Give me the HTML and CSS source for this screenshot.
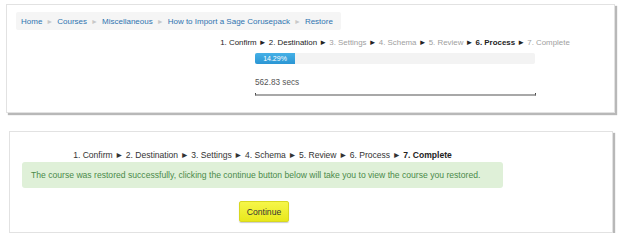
FILE: index.html
```html
<!DOCTYPE html>
<html lang="en">
<head>
    <meta charset="UTF-8">
    <title>Restore course</title>
    <link rel="stylesheet" href="styles.css">
</head>
<body>
    <div class="shot shot-progress">
        <div class="breadcrumb">
            <a href="#">Home</a><span class="sep">&#9658;</span>
            <a href="#">Courses</a><span class="sep">&#9658;</span>
            <a href="#">Miscellaneous</a><span class="sep">&#9658;</span>
            <a href="#">How to Import a Sage Corusepack</a><span class="sep">&#9658;</span>
            <a href="#">Restore</a>
        </div>

        <div class="restore">
            <div class="steps">
                <span class="done">1. Confirm</span> &#9658;
                <span class="done">2. Destination</span> &#9658;
                <span class="todo">3. Settings</span> &#9658;
                <span class="todo">4. Schema</span> &#9658;
                <span class="todo">5. Review</span> &#9658;
                <span class="current">6. Process</span> &#9658;
                <span class="todo">7. Complete</span>
            </div>
            <div class="progress">
                <div class="progress-bar" style="width: 14.29%">14.29%</div>
            </div>
            <div class="timer">562.83 secs</div>
            <div class="timer-line"></div>
        </div>
    </div>

    <div class="shot shot-complete">
        <div class="restore-done">
            <div class="steps steps-done">
                <span>1. Confirm</span> &#9658;
                <span>2. Destination</span> &#9658;
                <span>3. Settings</span> &#9658;
                <span>4. Schema</span> &#9658;
                <span>5. Review</span> &#9658;
                <span>6. Process</span> &#9658;
                <span class="current">7. Complete</span>
            </div>
            <div class="alert-success">
                The course was restored successfully, clicking the continue button below will take you to view the course you restored.
            </div>
            <div class="actions">
                <button class="continue-button">Continue</button>
            </div>
        </div>
    </div>
</body>
</html>
```

FILE: styles.css
```css
* {
    margin: 0;
    padding: 0;
    box-sizing: border-box;
}

body {
    font-family: 'Liberation Sans', Arial, sans-serif;
    background-color: #fff;
    color: #333;
    font-size: 8.5px;
}

.shot {
    background-color: #fff;
    border: 1px solid #e2e2e2;
    box-shadow: 2px 2px 1px rgba(0, 0, 0, 0.28);
}

.shot-progress {
    margin: 4px 0 0 6px;
    width: 609px;
    height: 109px;
    padding: 7px 0 0 9px;
}

.breadcrumb {
    display: inline-flex;
    align-items: center;
    height: 18px;
    padding: 0 8px 0 5px;
    background-color: #f5f5f5;
    border-radius: 2px;
    white-space: nowrap;
    font-size: 8px;
}

.breadcrumb a {
    color: #2f74b0;
    text-decoration: none;
}

.breadcrumb .sep {
    color: #c8c8c8;
    font-size: 7px;
    margin: 0 4px;
}

.restore {
    width: 352px;
    margin: 6px 0 0 203px;
    text-align: center;
}

.steps {
    white-space: nowrap;
    color: #222;
    font-size: 7.9px;
    line-height: 14px;
}

.steps .todo {
    color: #a0a0a0;
}

.steps .current {
    font-weight: bold;
    color: #222;
}

.progress {
    width: 280px;
    height: 11px;
    margin: 3px auto 0;
    background-color: #f3f3f3;
    border-radius: 2px;
    text-align: left;
    overflow: hidden;
}

.progress-bar {
    height: 100%;
    background: linear-gradient(#45b0e6, #2b96d4);
    color: #fff;
    font-size: 7px;
    line-height: 11px;
    text-align: center;
}

.timer {
    width: 280px;
    margin: 14px auto 0;
    text-align: left;
    color: #555;
    font-size: 8.2px;
}

.timer-line {
    width: 281px;
    height: 3px;
    margin: 6px auto 0;
    border-bottom: 2px solid #a8a8a8;
    border-left: 1px solid #444;
    border-right: 1px solid #444;
}

.shot-complete {
    margin: 18px 0 0 9px;
    width: 604px;
    height: 102px;
    padding: 16px 0 0 12px;
}

.restore-done {
    width: 481px;
}

.steps-done {
    text-align: center;
    font-size: 8.55px;
    color: #333;
}

.alert-success {
    height: 26px;
    padding-left: 9px;
    display: flex;
    align-items: center;
    background-color: #dff0d8;
    border-radius: 3px;
    color: #4a8a4a;
    font-size: 8.6px;
    white-space: nowrap;
}

.actions {
    margin-top: 13px;
    text-align: center;
}

.continue-button {
    width: 50px;
    height: 21px;
    margin-left: 3px;
    border: 1px solid #d8d820;
    border-radius: 2px;
    background: linear-gradient(#f6f64a, #e8e81c);
    box-shadow: 0 1px 1px rgba(0, 0, 0, 0.2);
    color: #333;
    font-family: 'Liberation Sans', Arial, sans-serif;
    font-size: 8.6px;
}
```
